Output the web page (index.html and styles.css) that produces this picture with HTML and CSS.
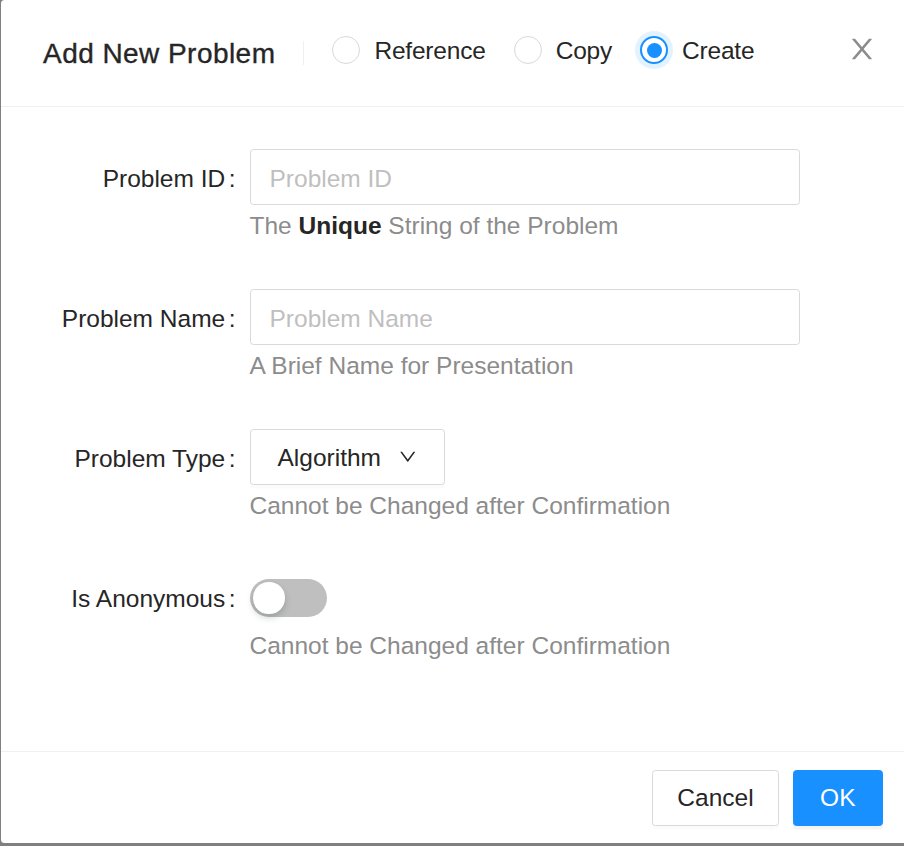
FILE: index.html
```html
<!DOCTYPE html>
<html lang="en">
<head>
<meta charset="utf-8">
<title>Add New Problem</title>
<link rel="stylesheet" href="styles.css">
</head>
<body>
<div class="modal">
  <div class="modal-header">
    <div class="modal-title">Add New Problem</div>
    <div class="divider"></div>
    <div class="radio-group">
      <label class="radio"><span class="radio-circle"></span><span class="radio-label">Reference</span></label>
      <label class="radio"><span class="radio-circle"></span><span class="radio-label">Copy</span></label>
      <label class="radio checked"><span class="radio-circle"></span><span class="radio-label">Create</span></label>
    </div>
    <button class="modal-close" type="button" aria-label="Close">
      <svg viewBox="64 64 896 896" width="28" height="28" fill="currentColor"><path d="M563.8 512l262.5-312.9c4.4-5.2.7-13.1-6.1-13.1h-79.8c-4.7 0-9.2 2.1-12.3 5.7L511.6 449.8 295.1 191.7c-3-3.6-7.5-5.7-12.3-5.7H203c-6.8 0-10.5 7.9-6.1 13.1L459.4 512 196.9 824.9A7.95 7.95 0 00203 838h79.8c4.7 0 9.2-2.1 12.3-5.7l216.5-258.1 216.5 258.1c3 3.6 7.5 5.7 12.3 5.7h79.8c6.8 0 10.5-7.900 6.1-13.1L563.8 512z"/></svg>
    </button>
  </div>

  <div class="modal-body">
    <div class="form-item">
      <div class="form-label"><label>Problem ID</label></div>
      <div class="form-control">
        <div class="control-row"><input class="input" type="text" placeholder="Problem ID"></div>
        <div class="form-extra">The <strong>Unique</strong> String of the Problem</div>
      </div>
    </div>

    <div class="form-item">
      <div class="form-label"><label>Problem Name</label></div>
      <div class="form-control">
        <div class="control-row"><input class="input" type="text" placeholder="Problem Name"></div>
        <div class="form-extra">A Brief Name for Presentation</div>
      </div>
    </div>

    <div class="form-item">
      <div class="form-label"><label>Problem Type</label></div>
      <div class="form-control">
        <div class="control-row">
          <button class="btn dropdown-btn" type="button"><span>Algorithm</span>
            <svg class="down-icon" viewBox="64 64 896 896" width="17.5" height="17.5" fill="currentColor"><path d="M884 256h-75c-5.1 0-9.9 2.5-12.9 6.6L512 654.2 227.9 262.6c-3-4.1-7.8-6.6-12.9-6.6h-75c-6.5 0-10.3 7.4-6.5 12.7l352.6 486.1c12.8 17.6 39 17.6 51.7 0l352.6-486.1c3.9-5.3.1-12.7-6.4-12.7z"/></svg>
          </button>
        </div>
        <div class="form-extra">Cannot be Changed after Confirmation</div>
      </div>
    </div>

    <div class="form-item">
      <div class="form-label"><label>Is Anonymous</label></div>
      <div class="form-control">
        <div class="control-row"><span class="switch"><span class="switch-handle"></span></span></div>
        <div class="form-extra">Cannot be Changed after Confirmation</div>
      </div>
    </div>
  </div>

  <div class="modal-footer">
    <button class="btn btn-cancel" type="button">Cancel</button>
    <button class="btn btn-primary" type="button">OK</button>
  </div>
</div>
</body>
</html>
```

FILE: styles.css
```css
html, body {
  margin: 0;
  padding: 0;
  overflow: hidden;
  height: 100%;
}

body {
  background: #808080;
  font-family: "Liberation Sans", Arial, sans-serif;
  font-size: 24.5px;
  color: #262626;
}

.modal {
  position: relative;
  width: 910px;
  margin-left: 1px;
  background: #fff;
  border-radius: 3.5px;
}

/* Header */
.modal-header {
  display: flex;
  align-items: center;
  height: 50px;
  padding: 28px 42px;
  border-bottom: 1px solid #f0f0f0;
}

.modal-title {
  font-size: 28px;
  line-height: 38.5px;
  letter-spacing: 0.45px;
  margin-top: 3px;
  color: #262626;
  -webkit-text-stroke: 0.35px #262626;
}

.divider {
  width: 1px;
  height: 24px;
  margin: 0 28px;
  background: #f0f0f0;
}

.radio-group {
  display: flex;
  align-items: center;
  margin-bottom: 6px;
}

.radio {
  display: inline-flex;
  align-items: center;
  margin-right: 14px;
  line-height: 38.5px;
  cursor: pointer;
}

.radio-circle {
  box-sizing: border-box;
  width: 28px;
  height: 28px;
  border: 1.5px solid #d9d9d9;
  border-radius: 50%;
  background: #fff;
  display: flex;
  align-items: center;
  justify-content: center;
}

.radio.checked .radio-circle {
  border: 2px solid #1890ff;
  box-shadow: 0 0 0 5px rgba(24, 144, 255, 0.12);
}

.radio.checked .radio-circle::after {
  content: "";
  width: 15px;
  height: 15px;
  border-radius: 50%;
  background: #1890ff;
}

.radio-label {
  padding: 2px 14px 0;
  letter-spacing: -0.2px;
}

.modal-close {
  position: absolute;
  top: 0;
  right: 0;
  width: 98px;
  height: 98px;
  padding: 0;
  border: 0;
  background: transparent;
  color: #8c8c8c;
  display: flex;
  align-items: center;
  justify-content: center;
  cursor: pointer;
}

/* Body */
.modal-body {
  padding: 42px;
}

.form-item {
  display: grid;
  grid-template-columns: 206.5px 550.7px;
  margin-bottom: 42px;
}

.form-label {
  box-sizing: border-box;
  height: 56px;
  padding-top: 2px;
  line-height: 56px;
  text-align: right;
  white-space: nowrap;
}

.form-label label::after {
  content: ":";
  margin: 0 14px 0 3.5px;
}

.control-row {
  min-height: 56px;
  display: flex;
  align-items: center;
}

.input {
  box-sizing: border-box;
  width: 100%;
  height: 56px;
  padding: 9px 19px 5px;
  border: 1px solid #d9d9d9;
  border-radius: 3.5px;
  font-family: inherit;
  font-size: 24.5px;
  color: #262626;
  background: #fff;
  outline: none;
}

.input::placeholder {
  color: #bfbfbf;
}

.form-extra {
  box-sizing: border-box;
  min-height: 42px;
  padding-top: 2px;
  line-height: 38.5px;
  color: #8c8c8c;
}

.form-extra strong {
  color: #262626;
}

/* Buttons */
.btn {
  box-sizing: border-box;
  height: 56px;
  padding: 2px 26.5px 0;
  border: 1px solid #d9d9d9;
  border-radius: 3.5px;
  background: #fff;
  color: #262626;
  font-family: inherit;
  font-size: 24.5px;
  line-height: 38.5px;
  box-shadow: 0 3.5px 0 rgba(0, 0, 0, 0.015);
  cursor: pointer;
}

.btn-cancel {
  padding: 2px 24px 0;
}

.dropdown-btn {
  display: inline-flex;
  align-items: center;
  padding: 2px 28px 0 27px;
}

.down-icon {
  margin-left: 18px;
  margin-top: -2px;
  color: #262626;
}

.btn-primary {
  margin-left: 14px;
  background: #1890ff;
  border-color: #1890ff;
  color: #fff;
  box-shadow: 0 3.5px 0 rgba(0, 0, 0, 0.045);
}

/* Switch */
.switch {
  position: relative;
  display: inline-block;
  width: 77px;
  height: 38.5px;
  margin-top: 2px;
  border-radius: 19.25px;
  background: #bfbfbf;
}

.switch-handle {
  position: absolute;
  top: 3.5px;
  left: 3.5px;
  width: 31.5px;
  height: 31.5px;
  border-radius: 50%;
  background: #fff;
  box-shadow: 0 3.5px 7px rgba(0, 35, 11, 0.2);
}

/* Footer */
.modal-footer {
  padding: 17.5px 28px;
  border-top: 1px solid #f0f0f0;
  display: flex;
  justify-content: flex-end;
}
```
